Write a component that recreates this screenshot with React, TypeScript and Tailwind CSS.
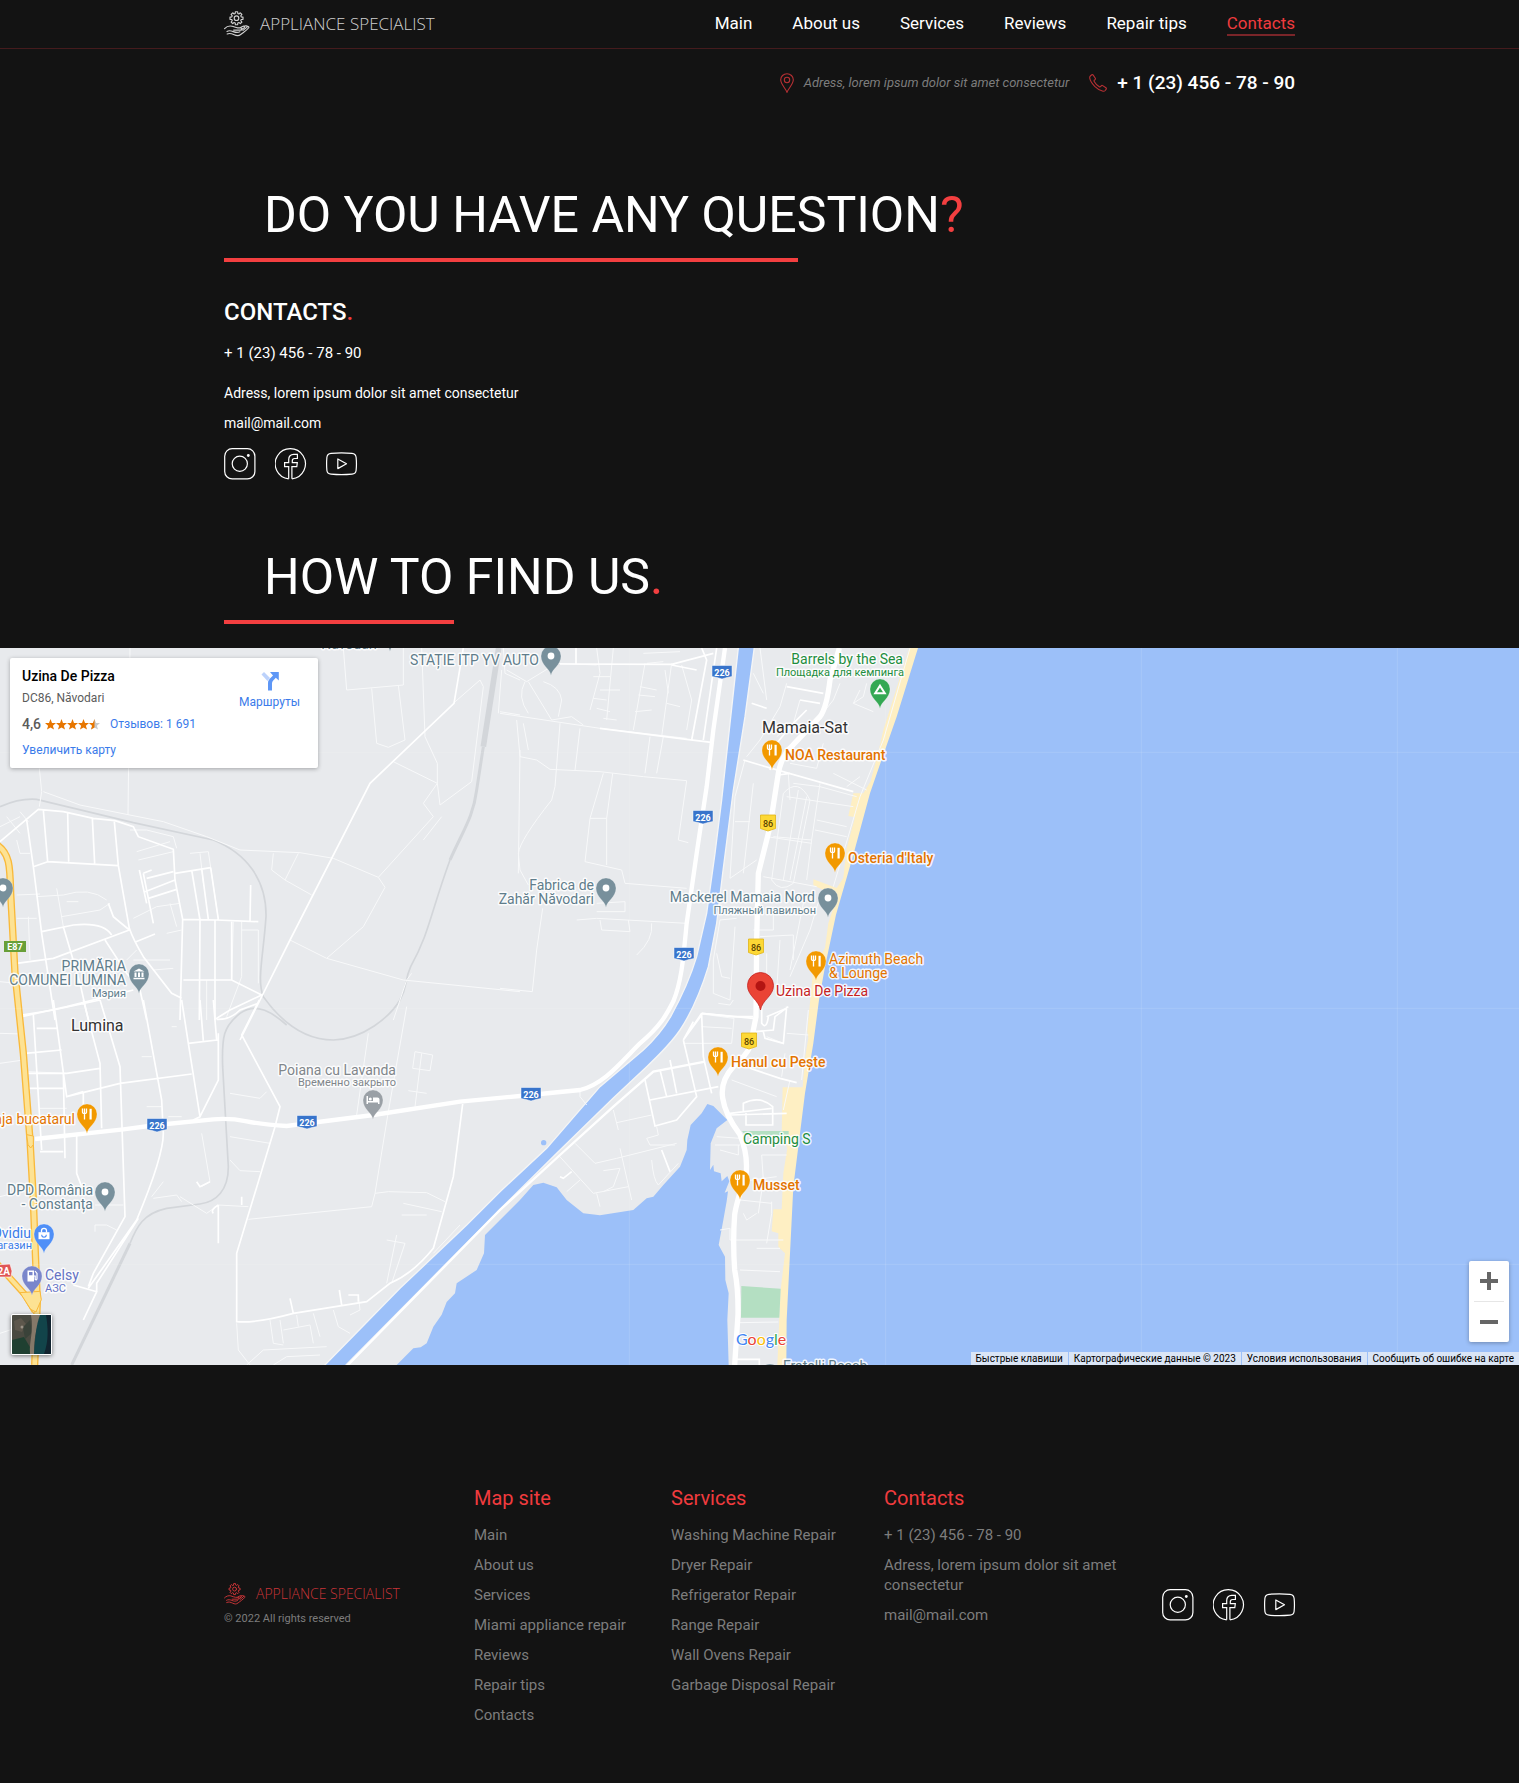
import React from "react";

const NAV = ["Main", "About us", "Services", "Reviews", "Repair tips", "Contacts"];
const SITE = ["Main", "About us", "Services", "Miami appliance repair", "Reviews", "Repair tips", "Contacts"];
const SERVICES = [
  "Washing Machine Repair",
  "Dryer Repair",
  "Refrigerator Repair",
  "Range Repair",
  "Wall Ovens Repair",
  "Garbage Disposal Repair",
];
const PHONE = "+ 1 (23) 456 - 78 - 90";
const ADDRESS = "Adress, lorem ipsum dolor sit amet consectetur";

const GEAR = (() => {
  const pts: string[] = [];
  for (let i = 0; i < 8; i++) {
    const steps: [number, number][] = [
      [-0.27, 4.9],
      [-0.17, 6.6],
      [0.17, 6.6],
      [0.27, 4.9],
    ];
    for (const [d, r] of steps) {
      const a = (i * Math.PI) / 4 + d;
      pts.push(`${(12.5 + r * Math.sin(a)).toFixed(2)} ${(7.2 - r * Math.cos(a)).toFixed(2)}`);
    }
  }
  return `M${pts.join("L")}Z`;
})();

function LogoMark({ className }: { className: string }) {
  return (
    <svg viewBox="0 0 26 26" className={className} fill="none" stroke="currentColor" strokeWidth="1.15" strokeLinejoin="round" strokeLinecap="round" aria-hidden="true">
      <path d={GEAR} />
      <circle cx="12.5" cy="7.2" r="2.3" />
      <path d="M.6 17.6C2.6 15.4 5.4 14.6 8 15.2c2.400.6 3.600 1.600 5.600 1.700h3.200c1.600 0 1.600 2 0 2.200H9.600" />
      <path d="M16.500 16.400 19 15.200c1.400-.6 2.300.7 1.200 1.500l-3 2M19.800 15.400l2-.6c1.200-.3 1.900.8 1 1.600l-3.800 3M22.800 15.600c1.500-.6 2.600.3 1.700 1.400-2 2.600-5.500 4.600-7.800 6.500-2.400 1.900-4 1.400-6.500.3-2.200-1-4.600-2-7-.8" />
      <path d="M3 20.400c2-1.200 4.300-.6 6.300.2 2.300.9 4.400 1.300 6.600.2" />
    </svg>
  );
}

function Socials() {
  const cls = "size-8";
  return (
    <ul className="flex gap-[19px] text-white">
      <li>
        <a href="#instagram" aria-label="Instagram">
          <svg viewBox="0 0 32 32" className={cls} fill="none" stroke="currentColor" strokeWidth="1.2">
            <rect x=".7" y=".7" width="30.200" height="30.200" rx="7.500" />
            <circle cx="15.800" cy="15.800" r="7.600" />
            <circle cx="24.300" cy="7.500" r="1.400" fill="currentColor" stroke="none" />
          </svg>
        </a>
      </li>
      <li>
        <a href="#facebook" aria-label="Facebook">
          <svg viewBox="0 0 32 32" className={cls} fill="none" stroke="currentColor" strokeWidth="1.2">
            <path d="M13.700 30.800V18.700H9.600v-4h4.100v-3.200c0-3.200 1.900-5.100 5-5.100h3.700v4.100h-2.800c-1.600 0-2.300.8-2.300 2.200v2h5l-.5 4h-4.900v12.100" />
            <path d="M13.700 30.800A15.100 15.100 0 1 1 16.900 30.800" />
          </svg>
        </a>
      </li>
      <li>
        <a href="#youtube" aria-label="YouTube">
          <svg viewBox="0 0 32 32" className={cls} fill="none" stroke="currentColor" strokeWidth="1.2" strokeLinejoin="round">
            <path d="M5 5.300Q15.500 4.300 26 5.300q3.700.4 4.100 4 .7 6.600 0 13.200-.4 3.300-4.100 3.700-10.500 1-21 0-3.700-.4-4.100-3.700-.6-6.600 0-13.200.4-3.600 4.100-4Z" />
            <path d="M11.800 11v9.600l8.700-4.800Z" />
          </svg>
        </a>
      </li>
    </ul>
  );
}

type PinKind = "dot" | "food" | "camp" | "hall" | "bed" | "bag" | "fuel";

function Pin({ x, y, color, kind = "dot" }: { x: number; y: number; color: string; kind?: PinKind }) {
  return (
    <g transform={`translate(${x} ${y})`}>
      <path d="M0 19.500C-1 12.500-10 9.500-10 0A10 10 0 0 1 10 0C10 9.500 1 12.500 0 19.500Z" fill={color} stroke="#fff" strokeOpacity=".35" strokeWidth=".6" />
      {kind === "dot" && <circle r="3.400" fill="#fff" />}
      {kind === "food" && (
        <g fill="none" stroke="#fff" strokeWidth="1.300">
          <path d="M-4.500-5.500v3.800q0 1.200 2 1.200t2-1.200v-3.800M-2.500-5.500V5.500" />
          <path d="M3.600-5.200V5.500" strokeWidth="2.200" />
        </g>
      )}
      {kind === "camp" && <path d="M0-3.300 4.800 4.300H-4.800Z" fill="none" stroke="#fff" strokeWidth="2" />}
      {kind === "hall" && <path d="M0-5.500 5.500-2.500H-5.500ZM-4.500-1.500h2V3h-2ZM-1-1.500H1V3H-1ZM2.500-1.500h2V3h-2ZM-5.500 3.800h11V5.300h-11Z" fill="#fff" />}
      {kind === "bed" && <path d="M-6.500-4h1.500V1H0v-3.500h4.500q2 0 2 2V4H5V2.500H-5V4H-6.500ZM-2.700-2.600a1.500 1.500 0 1 1 0 3 1.500 1.500 0 0 1 0-3Z" fill="#fff" />}
      {kind === "bag" && (
        <g>
          <path d="M-5.500-1.800h11V5.200h-11Z" fill="#fff" />
          <path d="M-2.500-1.500v-1.700a2.500 2.500 0 0 1 5 0v1.700" fill="none" stroke="#fff" strokeWidth="1.300" />
          <path d="M-2.300.8a2.300 2.300 0 0 0 4.600 0" fill="none" stroke={color} strokeWidth="1.100" />
        </g>
      )}
      {kind === "fuel" && (
        <g>
          <path d="M-4.500-5.500h6.500v11h-6.500ZM-3-4V-.7H.5V-4Z" fill="#fff" fillRule="evenodd" />
          <path d="M2 0h1.200v3.500q1.800 1 1.800-1V-2.500L3-5" fill="none" stroke="#fff" strokeWidth="1.200" />
        </g>
      )}
    </g>
  );
}

function Label({ x, y, color, end, size = 14, medium, children }: { x: number; y: number; color: string; end?: boolean; size?: number; medium?: boolean; children: React.ReactNode }) {
  return (
    <text x={x} y={y} fill={color} fontSize={size} fontWeight={medium ? 500 : 400} textAnchor={end ? "end" : "start"} stroke="#fff" strokeOpacity=".85" strokeWidth="3" strokeLinejoin="round" paintOrder="stroke">
      {children}
    </text>
  );
}

function Blue226({ x, y }: { x: number; y: number }) {
  return (
    <g transform={`translate(${x} ${y})`}>
      <path d="M-10-6.500H10V4.500L5 5.500 0 7-5 5.500-10 4.500Z" fill="#3874cb" stroke="#fff" strokeOpacity=".6" strokeWidth=".8" />
      <text y="3.500" fontSize="9" fontWeight="700" fill="#fff" textAnchor="middle">226</text>
    </g>
  );
}

function Yellow86({ x, y }: { x: number; y: number }) {
  return (
    <g transform={`translate(${x} ${y})`}>
      <path d="M-7.500-8h15V5.500L0 8-7.500 5.500Z" fill="#fdd835" stroke="#e0b416" strokeWidth=".8" />
      <text y="3.500" fontSize="9" fontWeight="500" fill="#5a4300" textAnchor="middle">86</text>
    </g>
  );
}

const SLATE = "#607d8b";
const SLATE_PIN = "#78909c";
const ORANGE = "#e37400";
const ORANGE_PIN = "#f29900";

function MapDrawing() {
  return (
    <svg viewBox="0 648 1519 717" preserveAspectRatio="xMidYMid slice" className="block h-full w-full font-['Roboto',sans-serif]" role="img" aria-label="Map of Mamaia-Sat">
      <rect y="648" width="1519" height="717" fill="#e8eaed" />
      <svg x="0" y="648" width="1519" height="717" viewBox="0 0 4557 2151" fill="none">
        {/* beach, sea, lake and canal */}
        <path fill="#feefc3" d="M2728 0 2650 246 2640 290 2612 400 2590 436H2560L2545 504 2565 508 2540 600 2530 690 2510 720 2440 694V712L2500 740 2500 780 2485 826 2475 900 2440 960 2425 1116 2422 1150 2425 1170 2415 1230 2408 1318H2348L2345 1456 2362 1500 2350 1576 2345 1684H2320L2315 1750 2335 1756V1796L2355 1816 2342 1926 2338 2011 2332 2151H2900V0Z" />
        <path fill="#9cc0f9" d="M2754 0 2690 206 2650 320 2610 436 2560 620 2508 800 2475 956 2457 1056 2440 1186 2415 1336 2400 1456 2380 1616 2368 1856 2360 2016 2359 2151H4557V0Z" />
        <path fill="#9cc0f9" stroke="#f4f5f6" strokeWidth="4" d="M2216-10 2190 226 2165 456 2145 616 2120 796 2090 926Q2065 1010 2012 1106 1980 1160 1930 1206L1800 1316 1640 1501 1500 1631 1400 1731 1200 1921 965 2161H1028L1500 1684 1670 1516 1840 1350 1940 1256Q2010 1190 2040 1146 2090 1070 2125 956L2150 826 2168 676 2200 426 2235 206 2264-10Z" />
        <path fill="#9cc0f9" d="M1190 2151 1240 2101 1262 2098 1280 2086 1300 2036 1325 2000 1340 1962 1365 1936 1370 1906 1430 1866 1452 1816 1455 1761 1500 1716 1560 1656 1600 1611 1630 1604 1670 1618 1700 1656 1750 1696 1800 1702 1900 1686 1940 1651 1960 1646 1990 1611 2040 1556 2060 1506 2062 1476 2072 1431 2105 1396 2122 1368 2140 1374 2182 1416 2150 1441 2132 1486 2130 1566 2140 1550 2142 1570 2162 1576 2165 1600 2182 1584 2188 1600 2174 1634 2184 1630 2180 1660 2170 1716 2156 1791 2175 1826 2176 1896 2186 1936 2182 2016 2186 2151Z" />
        <circle cx="1631" cy="1484" r="8" fill="#9cc0f9" />
        <path fill="#b4dfc2" d="M2224 1914 2342 1922 2338 2009H2223ZM2226 1449H2366V1461H2236Z" />

        {/* railways */}
        <g stroke="#d3d6da" strokeWidth="5">
          <path d="M0 476Q60 450 110 454L400 524 640 576C740 616 800 696 798 806 790 926 770 996 790 1046 850 1130 920 1176 1000 1176 1090 1174 1170 1106 1200 1056 1225 1010 1212 1000 1232 956 1290 850 1290 800 1350 636" />
          <path strokeWidth="9" d="M1350 636C1390 546 1420 506 1430 426L1450 296" />
          <path strokeWidth="17" d="M1450 296 1496 0" />
          <path d="M860 1131C820 1096 770 1060 720 1096 670 1136 665 1166 668 1256L685 1556C685 1626 650 1661 600 1668L500 1681C430 1696 410 1736 390 1786" />
          <path strokeWidth="9" d="M390 1786 215 2151" />
        </g>

        {/* lanes */}
        <g stroke="#f8f9fa" strokeWidth="3">
          <g transform="translate(0 -24)">
            <path d="M390 24 384 524 490 545 620 590 720 630 900 638 1000 655 1135 712 1155 742 1090 860 980 955 870 900M118 385 125 455 118 500M130 455 240 495 384 524M820 640 815 690 855 720 935 765M895 640 855 720M1135 712 1300 530 1270 490 1312 430 1320 495 1415 425 1450 140 1440 120 1360 190M1180 365 1312 430M1030 24 1040 150 1210 135V24M1115 145 1130 310 1165 322 1215 300 1195 135M1265 24 1275 290 1312 370V430M980 955 1210 1020 1560 1055M1235 1000 1220 1020 1180 1140M1325 530 1270 600M1560 330 1555 700M0 1025 30 1028M1500 215 1560 225M1495 220 1505 90M1510 24 1515 100 1560 120" />
            <path d="M410 635 510 605M415 660 520 635M390 570H440L520 590 530 625M570 640 625 635 655 838M600 640 610 730M50 765 120 762M50 835H110M170 745 190 860M185 830 300 810 330 790M200 785H235M85 830 90 960M110 770 190 765Q270 740 320 780M400 835 470 800 540 790M500 880 545 870M510 790 530 860M700 845 695 1020M725 870H775V1030M725 845V1010L680 1130M400 960H510M410 930 380 960M620 1020V1140M460 990 520 985M0 560 60 530M20 530 60 580M60 515 85 545M50 600 60 640H90" />
          </g>
          <g transform="translate(0 1056)">
            <path d="M0 100 70 102M0 190 70 180M690 410 810 430M690 480 720 512 780 515M745 658 1115 620 1125 580 1165 335M1125 580 1165 575 1280 578 1335 605M1105 100 1070 345M1220 20 1165 335M1245 155 1298 165 1290 212 1238 205ZM1265 160 1245 320M1225 272 1280 280M1210 610 1325 635M1205 645H1280M1160 720 1215 730 1175 850M1190 705 1160 850M540 590 580 615 620 640 655 615 745 620M460 595 530 585 545 605M455 590 490 545M285 695V675H320L350 690M285 615H370M605 400 630 545 605 560M85 215 200 220M120 325H200M440 320H485M425 170H455M515 80H530M505 350H545M810 960 820 1030 850 1035M840 960 850 1030M850 990 930 975 940 1030M890 945 895 980M940 940 960 1010M1000 930 1015 980 1050 1000M710 970 715 1050 750 1095M740 1095 790 1050 980 1040M820 1095 860 1070 960 1065M1380 675 1300 760M0 590 60 575M0 1000 60 980M1075 885 1080 930 1050 945M690 280 780 295 800 275" />
          </g>
          <g transform="translate(1500 -24)">
            <path d="M20 90 80 125 170 70 290 75M85 125 155 240 215 230 250 255M130 125Q180 140 185 180L175 230M75 125Q50 170 85 220M290 24 300 100 270 210M340 24 320 240M435 70 400 270M515 70 485 290M545 75 575 180 560 270M0 220 300 265 560 295M50 240 60 350 110 360 150 388 300 395 430 410 560 422M70 250 85 330M180 250 165 440 155 480Q60 600 55 640L60 690 85 735M240 265 225 390M450 290 435 400M490 290 470 400M560 422 535 600 565 608M310 400 270 535H320L338 400M270 535 255 665 365 690 375 730 560 745M320 535V675M230 840 290 835 560 850M290 790 375 785V815H290M300 840 305 870 390 875 385 840M455 850Q460 900 410 945M128 805 110 930 97 1055 0 1045M280 110H330M300 150H360M280 175 320 180M290 205 330 215M310 235 350 240M420 140 470 150M415 165 465 170M405 215 455 210M495 90 505 160M500 190 540 200M430 40 540 35M440 70 490 65" />
            <path d="M780 24 800 180M760 100 790 160M860 130 840 200 780 300 740 350M900 180 880 250 830 290M1020 130 1000 180 960 230M1100 130 1090 170 1060 190 1120 215M1080 150 1060 190M865 400 870 480M880 430 960 440 1070 470M860 470 1060 500M960 430 935 600 920 720M950 540 1040 560M945 570 1040 590M800 590 935 610M820 590 935 600M770 660 690 715 705 470 735 360M705 545H750M760 430 730 700M930 480 880 730Q840 760 815 720L850 460Q895 410 930 480ZM895 450 850 720M920 470 870 720M790 710 950 740M960 770 930 870 870 1010M910 790 870 990M1230 24 1150 300 1080 470 1000 740M650 940 665 1010 690 1015M705 860 690 1080 640 1060V960L660 840 710 835M760 870H820V800M780 890 880 885V960M800 940V1030M840 900 830 1050M1040 440 1080 410M870 370 950 385 970 310M1000 400 1100 450" />
          </g>
          <g transform="translate(1500 1056)">
            <path d="M605 80 695 85M550 130H695L702 55 605 42M695 240 830 290M860 100 925 105M870 240 850 330M850 130 800 110M925 30 905 240M340 330 355 390M350 368 455 345M440 415 475 405 470 380M440 415 450 435 525 435M225 430 285 490 350 475 530 430M310 512 360 505 340 560 310 575M360 445 395 600M175 465 280 580 385 560M290 580 300 620M240 540 200 575M455 480Q460 540 475 555L535 490M645 435H720M650 410 720 415M660 450 715 465V435M785 465H860M785 465 790 540 775 640M815 605V640L800 730M720 600 815 610M720 810 840 815M720 968 835 966M660 690 690 685V720H850M770 745H840M240 270V290L260 315M720 545 830 530M730 640 740 660 770 640M655 10 690 15 700 0M855 160 845 230" />
          </g>
        </g>

        {/* streets */}
        <g stroke="#fff" strokeWidth="5">
          <g transform="translate(0 -24)">
            <path d="M1390 24 1362 190 1110 430 870 900 720 1200M0 605 115 508 190 515 280 535 345 542 400 560 415 590 520 628 525 720 548 838 540 1140M80 540 100 680 125 880 165 1140M130 510 143 665 355 677M203 520 206 665M277 535 284 670M343 545 355 677 388 865Q400 900 430 950L515 1060 545 1075M100 680 143 665M125 875 220 855Q310 845 335 885M50 970 160 955 388 870M190 860 240 1030 265 1140M315 900 380 1000 420 1050 440 1140M65 1130 200 1100 400 1050M548 838 650 840 775 845M600 840 598 1140M645 840V1140M550 1020H695L785 1065 690 1110 645 1138M575 690 600 840M605 685 625 838M632 683 655 838M525 700 632 683M430 700 460 850M430 700 455 690M440 715 520 695M435 755 525 720M445 775 530 748M418 690 440 790M752 735 750 845M695 845V1020M325 790 340 830 388 870M408 905 465 882" />
          </g>
          <g transform="translate(0 1056)">
            <path d="M778 0 725 105 840 320 825 380 710 760V965Q770 970 880 940L1100 905 1170 850Q1240 820 1300 745L1360 530 1388 312M545 0 565 130 600 350 580 360M565 130 650 120 640 0M600 0 610 122M655 100V240L600 350M65 45 160 30 300 0M100 45 125 450M160 0 200 290 250 275M250 0 300 190 305 385M300 0 360 200 375 650 280 820 265 860M430 0 485 300 490 400Q490 470 410 660L265 865M75 160 185 150M110 85H170M80 220H200L300 205M80 265H190M190 220 195 475M120 455H190M230 405V520L245 560M200 290 360 250 575 222M250 275V320M650 58Q690 60 720 30L775 10M220 855 290 875 250 960M415 655 290 850 290 875M870 895 880 940M1018 870 1025 915M1045 885H1075V905M590 545 600 560 630 545M655 615V730M655 615Q630 630 640 640M725 590V615" />
          </g>
          <g transform="translate(1500 -24)">
            <path d="M300 265 560 298 640 308M180 72 515 73 640 40M228 24V72M605 24 620 60 575 300M650 24 610 300M515 75 590 90M730 360 780 375 1060 455M835 405 870 400M755 190 800 205M860 140 970 160M900 180 960 190M920 210 880 250 830 310 810 390M605 1120 700 1130 760 1130M800 1130 860 1105" />
          </g>
          <g transform="translate(1500 1056)">
            <path d="M605 40 550 120 605 45 610 170 635 280M550 120 590 290 530 360 465 378 435 240M450 300 655 260M480 210 500 290M510 180 530 280M580 65 550 120M785 20V70Q800 90 805 50M765 95 820 90 825 50 865 20M790 95 795 115 850 130 860 20M690 340 815 325M730 335V310Q780 285 818 320V375H738V340M690 345 860 340M750 205 840 235 890 248M705 1078H778V1095M485 450 510 515M180 530 190 535 215 515M605 40 760 55" />
            <path d="M-462 1101 0 630 180 465 340 320 460 215 615 185" strokeWidth="7" />
          </g>
        </g>

        {/* main roads */}
        <path stroke="#fff" strokeWidth="13" d="M105 1473 370 1444 470 1431 640 1414Q690 1410 740 1420T860 1434L1120 1401 1380 1361 1560 1344 1740 1326C1810 1310 1860 1246 1920 1186 1980 1136 2000 1100 2020 1060 2045 1000 2050 930 2060 826L2090 616 2120 416 2140 246 2175 0" />
        <path stroke="#fff" strokeWidth="16" d="M2518 0 2490 96Q2480 180 2460 206L2380 290Q2345 320 2335 376L2310 536 2275 676 2270 876 2268 1106 2250 1196Q2240 1220 2200 1256 2160 1300 2168 1350 2175 1400 2220 1460 2245 1520 2238 1580 2210 1660 2204 1700 2198 1780 2204 1866 2215 1920 2214 2000L2204 2151" />
        <g strokeLinejoin="round">
          <path stroke="#f9b93a" strokeWidth="22" d="M-10 590C30 616 30 656 32 736L45 976 70 1216 90 1476 100 1656 108 1866 112 1960 104 2151" />
          <path stroke="#f9b93a" strokeWidth="20" d="M-10 1846 75 1940 105 1990" />
          <path stroke="#fde293" strokeWidth="14" d="M-10 590C30 616 30 656 32 736L45 976 70 1216 90 1476 100 1656 108 1866 112 1960 104 2151" />
          <path stroke="#fde293" strokeWidth="12" d="M-10 1846 75 1940 105 1990" />
          <path fill="#fde293" stroke="#f9b93a" strokeWidth="3" d="M80 1460 100 1464V1490L92 1500 84 1490ZM60 1934 120 1930 124 1955 108 1992 92 1984Z" />
        </g>

        <path stroke="#fff" strokeOpacity=".12" strokeWidth="3" d="M1888 0V2151M2657 0V2151M3424 0V2151M4192 0V2151M0 313H4557M0 1081H4557M0 1849H4557" />
      </svg>

      <Blue226 x={722} y={672} />
      <Blue226 x={703} y={817} />
      <Blue226 x={684} y={954} />
      <Blue226 x={531} y={1094} />
      <Blue226 x={157} y={1125} />
      <Blue226 x={307} y={1122} />
      <Yellow86 x={768} y={823} />
      <Yellow86 x={756} y={947} />
      <Yellow86 x={749} y={1041} />
      <rect x="4" y="941" width="22" height="11" fill="#689f38" />
      <text x="15" y="950" fontSize="9" fontWeight="700" fill="#fff" textAnchor="middle">E87</text>
      <path d="M-6 1265 10 1264 12 1271 11 1277H-6Z" fill="#e05555" stroke="#fff" strokeWidth=".6" />
      <text x="10" y="1275" fontSize="10" fontWeight="700" fill="#fff" textAnchor="end">2A</text>

      <Pin x={390} y={632} color={SLATE_PIN} />
      <Label x={377} y={649} color={SLATE} end>Năvodari</Label>
      <Pin x={551} y={656} color={SLATE_PIN} />
      <Label x={539} y={665} color={SLATE} end>STAȚIE ITP YV AUTO</Label>
      <Pin x={880} y={689} color="#34a853" kind="camp" />
      <Label x={903} y={664} color="#1e8e3e" end>Barrels by the Sea</Label>
      <Label x={904} y={676} color="#1e8e3e" size={11} end>Площадка для кемпинга</Label>
      <Label x={762} y={733} color="#333" size={16}>Mamaia-Sat</Label>
      <Pin x={772} y={750} color={ORANGE_PIN} kind="food" />
      <Label x={785} y={760} color={ORANGE} medium>NOA Restaurant</Label>
      <Pin x={835} y={853} color={ORANGE_PIN} kind="food" />
      <Label x={848} y={863} color={ORANGE} medium>Osteria d'Italy</Label>
      <Pin x={606} y={888} color={SLATE_PIN} />
      <Label x={594} y={890} color={SLATE} end>Fabrica de</Label>
      <Label x={594} y={904} color={SLATE} end>Zahăr Năvodari</Label>
      <Pin x={828} y={898} color={SLATE_PIN} />
      <Label x={815} y={902} color={SLATE} end>Mackerel Mamaia Nord</Label>
      <Label x={816} y={914} color={SLATE} size={11} end>Пляжный павильон</Label>
      <Pin x={816} y={961} color={ORANGE_PIN} kind="food" />
      <Label x={829} y={964} color={ORANGE}>Azimuth Beach</Label>
      <Label x={829} y={978} color={ORANGE}>&amp; Lounge</Label>
      <Pin x={718} y={1057} color={ORANGE_PIN} kind="food" />
      <Label x={731} y={1067} color={ORANGE} medium>Hanul cu Pește</Label>
      <Label x={743} y={1144} color="#1e8e3e">Camping S</Label>
      <Pin x={740} y={1180} color={ORANGE_PIN} kind="food" />
      <Label x={753} y={1190} color={ORANGE} medium>Musset</Label>
      <Pin x={770} y={1374} color={SLATE_PIN} />
      <Label x={783} y={1371} color={SLATE}>Fratelli Beach</Label>
      <Pin x={139} y={974} color={SLATE_PIN} kind="hall" />
      <Label x={126} y={971} color={SLATE} end>PRIMĂRIA</Label>
      <Label x={126} y={985} color={SLATE} end>COMUNEI LUMINA</Label>
      <Label x={126} y={997} color={SLATE} size={11} end>Мэрия</Label>
      <Pin x={3} y={888} color={SLATE_PIN} />
      <Label x={71} y={1031} color="#333" size={16}>Lumina</Label>
      <Pin x={373} y={1100} color="#9aa0a6" kind="bed" />
      <Label x={396} y={1075} color="#80868b" end>Poiana cu Lavanda</Label>
      <Label x={396} y={1086} color="#80868b" size={11} end>Временно закрыто</Label>
      <Pin x={87} y={1114} color={ORANGE_PIN} kind="food" />
      <Label x={75} y={1124} color={ORANGE} end>aja bucatarul</Label>
      <Pin x={105} y={1192} color={SLATE_PIN} />
      <Label x={93} y={1195} color={SLATE} end>DPD România</Label>
      <Label x={93} y={1209} color={SLATE} end>- Constanța</Label>
      <Pin x={44} y={1234} color="#4f8ff7" kind="bag" />
      <Label x={31} y={1238} color="#3b7de9" end>Ovidiu</Label>
      <Label x={32} y={1249} color="#3b7de9" size={11} end>агазин</Label>
      <Pin x={32} y={1276} color="#7986cb" kind="fuel" />
      <Label x={45} y={1280} color="#6472c4">Celsy</Label>
      <Label x={45} y={1292} color="#6472c4" size={11}>АЗС</Label>

      <path d="M760.500 1010C759 1000 747.500 996 747.500 985.500A13 13 0 0 1 773.500 985.500C773.500 996 762 1000 760.500 1010Z" fill="#ea4335" stroke="#c5221f" strokeWidth=".8" />
      <circle cx="760.500" cy="986" r="5" fill="#b31412" />
      <Label x={776} y={996} color="#c5221f">Uzina De Pizza</Label>

      <text x="736" y="1345" fontSize="16" className="font-['Lato',sans-serif]" stroke="#fff" strokeWidth="2" paintOrder="stroke">
        <tspan fill="#4285f4">G</tspan><tspan fill="#ea4335">o</tspan><tspan fill="#fbbc04">o</tspan><tspan fill="#4285f4">g</tspan><tspan fill="#34a853">l</tspan><tspan fill="#ea4335">e</tspan>
      </text>
    </svg>
  );
}

function Stars() {
  const star = "M5.500 0 7 3.900 11 4.100 7.900 6.700 9 10.600 5.500 8.400 2 10.600 3.100 6.700 0 4.100 4 3.900Z";
  return (
    <svg viewBox="0 0 55 11" className="h-[11px] w-[55px]" role="img" aria-label="4,6 из 5">
      {[0, 11, 22, 33].map((x) => (
        <path key={x} d={star} transform={`translate(${x} 0)`} fill="#e77600" />
      ))}
      <path d={star} transform="translate(44 0)" fill="#c9c9c9" />
      <path d="M5.500 0V8.400L2 10.600 3.100 6.700 0 4.100 4 3.900Z" transform="translate(44 0)" fill="#e77600" />
    </svg>
  );
}

function MapSection() {
  return (
    <section className="relative h-[717px] overflow-hidden font-['Roboto',sans-serif]">
      <MapDrawing />

      <div className="absolute top-[10px] left-[10px] flex h-[110px] w-[308px] justify-between rounded-xs bg-white pt-[10px] pr-[18px] pl-3 shadow-[0_1px_4px_rgba(0,0,0,0.3)]">
        <div className="flex flex-col items-start text-xs">
          <h3 className="text-sm leading-4 font-medium text-black">Uzina De Pizza</h3>
          <p className="mt-[6px] leading-4 text-[#5b5b5b]">DC86, Năvodari</p>
          <div className="mt-[10px] flex items-center leading-4">
            <span className="mr-1 text-sm leading-4 font-medium text-[#5b5b5b]">4,6</span>
            <Stars />
            <a href="#reviews" className="ml-[10px] text-[#3a7bea]">Отзывов: 1 691</a>
          </div>
          <a href="#larger" className="mt-[10px] leading-4 text-[#3a7bea]">Увеличить карту</a>
        </div>
        <a href="#directions" className="flex flex-col items-center self-start pt-[3px] text-xs leading-4 text-[#3a7bea]">
          <svg viewBox="0 0 20 20" className="size-5" aria-hidden="true">
            <path d="M1.500 3.500 4 1l6 6-2.500 3Z" fill="#bcd2fb" />
            <path d="M8 19.500V12Q8 9.500 10 7.500L13 4.500 10 1H18.800V9.500L15.800 6.800 13 9.800Q12 11 12 12.500V19.500Z" fill="#5e97f6" />
          </svg>
          <span className="mt-[3px]">Маршруты</span>
        </a>
      </div>

      <div className="absolute right-[10px] bottom-[23px] flex h-[81px] w-10 flex-col items-center rounded-xs bg-white shadow-[0_1px_4px_rgba(0,0,0,0.3)]">
        <button type="button" aria-label="Zoom in" className="flex h-10 w-full items-center justify-center">
          <svg viewBox="0 0 18 18" className="size-[18px]" aria-hidden="true"><path d="M7 0h4v7h7v4h-7v7H7v-7H0V7h7Z" fill="#666" /></svg>
        </button>
        <div className="h-px w-[30px] bg-[#e6e6e6]" />
        <button type="button" aria-label="Zoom out" className="flex h-10 w-full items-center justify-center">
          <svg viewBox="0 0 18 18" className="size-[18px]" aria-hidden="true"><path d="M0 7h18v4H0Z" fill="#666" /></svg>
        </button>
      </div>

      <button type="button" aria-label="Satellite view" className="absolute bottom-[10px] left-[11px] size-[41px] overflow-hidden rounded-xs border border-white shadow-[0_1px_4px_rgba(0,0,0,0.5)]">
        <svg viewBox="0 0 39 39" className="size-full" aria-hidden="true">
          <rect width="39" height="39" fill="#4a4a41" />
          <path d="M0 25 12 22 22 39H0Z" fill="#1f4031" />
          <path d="M2 6 9 3 14 9 10 17 3 15Z" fill="#5d574c" />
          <path d="M11 12 18 5 20 18 13 24Z" fill="#3a4239" />
          <path d="M19 0H30C25 10 22 20 22 39H18C17 26 22 16 19 0Z" fill="#857869" />
          <path d="M28 0H39V39H22C23 24 24 10 28 0Z" fill="#12444a" />
          <path d="M34 0H39V39H32C37 26 36 12 34 0Z" fill="#11232f" />
          <circle cx="10" cy="12" r="1.500" fill="#9a9185" />
        </svg>
      </button>

      <div className="absolute right-0 bottom-0 flex gap-px text-[10px] leading-[13px] text-black">
        <button type="button" className="bg-[#f5f5f5]/70 px-[5px]">Быстрые клавиши</button>
        <span className="bg-[#f5f5f5]/70 px-[5px]">Картографические данные © 2023</span>
        <a href="#terms" className="bg-[#f5f5f5]/70 px-[5px]">Условия использования</a>
        <a href="#report" className="bg-[#f5f5f5]/70 px-[5px]">Сообщить об ошибке на карте</a>
      </div>
    </section>
  );
}

function FooterColumn({ title, children }: { title: string; children: React.ReactNode }) {
  return (
    <div className="self-start">
      <h4 className="text-xl leading-[26px] text-[#f03b3e]">{title}</h4>
      <ul className="mt-[14px] flex flex-col gap-[10px] leading-5">{children}</ul>
    </div>
  );
}

export default function App() {
  return (
    <div className="min-h-screen bg-[#131313] font-['Roboto',sans-serif] text-white">
      <header className="border-b border-[#451b1d]">
        <div className="mx-auto flex h-12 max-w-[1071px] items-center justify-between">
          <a href="#home" className="flex items-center gap-[10px] text-[#d0d0d0]">
            <LogoMark className="size-[26px]" />
            <span className="font-['Open_Sans',sans-serif] text-[17px] leading-6 font-light">APPLIANCE SPECIALIST</span>
          </a>
          <nav className="flex gap-10 text-[17px] leading-[22px]">
            {NAV.map((n) => (
              <a key={n} href="#nav" className={n === "Contacts" ? "border-b-2 border-[#7a2529] text-[#f03b3e]" : "border-b-2 border-transparent"}>
                {n}
              </a>
            ))}
          </nav>
        </div>
      </header>

      <main>
        <div className="mx-auto max-w-[1071px]">
          <div className="flex items-center justify-end pt-[22px]">
            <svg viewBox="0 0 14 20" className="mr-[10px] h-5 w-[14px] text-[#b73034]" fill="none" stroke="currentColor" strokeWidth="1.100" aria-hidden="true">
              <path d="M7 19.200C5.500 15.500.7 11 .7 6.800a6.300 6.100 0 0 1 12.600 0C13.300 11 8.500 15.500 7 19.200Z" />
              <circle cx="7" cy="7" r="2.700" />
            </svg>
            <address className="mr-5 text-[13px] leading-6 text-[#7d7d7d] italic">{ADDRESS}</address>
            <svg viewBox="0 0 18 18" className="mr-[10px] size-[18px] text-[#b73034]" fill="none" stroke="currentColor" strokeWidth="1.100" strokeLinejoin="round" aria-hidden="true">
              <path d="M1.600 1.700 2.800.8Q3.600.3 4.200 1.100L6.300 4.200Q6.800 5 6 5.700L5.200 6.300Q4.800 6.800 5.200 7.500 7 10.800 10.300 12.700 11 13.100 11.500 12.600L12.200 11.800Q12.900 11.100 13.700 11.600L16.900 13.800Q17.700 14.400 17.200 15.200L16.200 16.500Q15.400 17.400 14 17.200 10 16.500 5.700 12.300 1.300 7.800.7 3.900.6 2.500 1.600 1.700Z" />
            </svg>
            <a href="tel:+1234567890" className="text-[19px] leading-6 font-medium">{PHONE}</a>
          </div>

          <h1 className="mt-[87px] pl-10 text-[50px] leading-[66px]">DO YOU HAVE ANY QUESTION<span className="text-[#f33f40]">?</span></h1>
          <div className="mt-[10px] h-1 w-[574px] bg-[#f33f40]" />

          <h2 className="mt-[34px] text-2xl leading-8 font-medium">CONTACTS<span className="text-[#f33f40]">.</span></h2>
          <ul className="mt-[15px] text-sm leading-5">
            <li className="text-[15px]"><a href="tel:+1234567890">{PHONE}</a></li>
            <li className="mt-5">{ADDRESS}</li>
            <li className="mt-[10px]"><a href="mailto:mail@mail.com">mail@mail.com</a></li>
          </ul>
          <div className="mt-[15px]"><Socials /></div>

          <h1 className="mt-16 pl-10 text-[50px] leading-[66px]">HOW TO FIND US<span className="text-[#f33f40]">.</span></h1>
          <div className="mt-[10px] mb-6 h-1 w-[230px] bg-[#f33f40]" />
        </div>
        <MapSection />
      </main>

      <footer className="mx-auto grid max-w-[1071px] grid-cols-[206px_153px_169px_1fr_133px] items-center gap-x-11 pt-[120px] pb-14 text-[15px] text-[#7d7d7d]">
        <div>
          <a href="#home" className="flex items-center gap-[10px] text-[#c93438]">
            <LogoMark className="size-[22px]" />
            <span className="font-['Open_Sans',sans-serif] text-sm leading-[22px] font-light">APPLIANCE SPECIALIST</span>
          </a>
          <p className="mt-[6px] text-[11px] leading-4">© 2022 All rights reserved</p>
        </div>
        <FooterColumn title="Map site">
          {SITE.map((s) => <li key={s}><a href="#site" className="whitespace-nowrap">{s}</a></li>)}
        </FooterColumn>
        <FooterColumn title="Services">
          {SERVICES.map((s) => <li key={s}><a href="#services" className="whitespace-nowrap">{s}</a></li>)}
        </FooterColumn>
        <FooterColumn title="Contacts">
          <li><a href="tel:+1234567890">{PHONE}</a></li>
          <li>{ADDRESS}</li>
          <li><a href="mailto:mail@mail.com">mail@mail.com</a></li>
        </FooterColumn>
        <Socials />
      </footer>
    </div>
  );
}
